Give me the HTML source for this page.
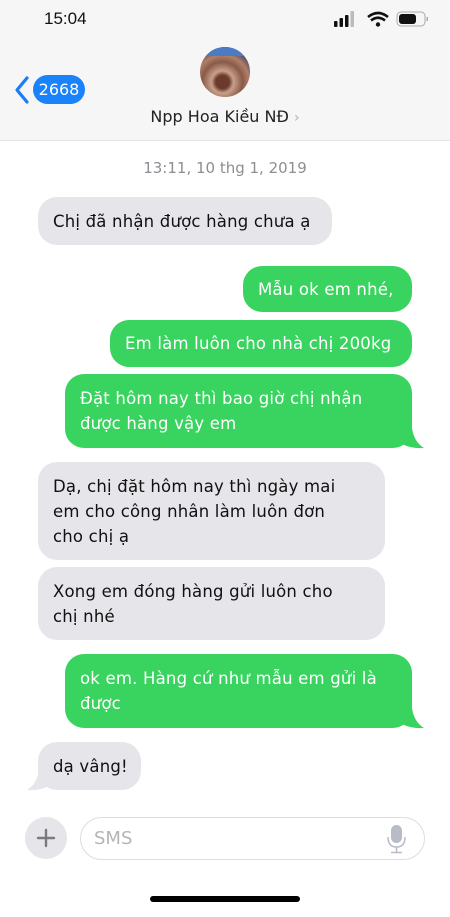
<!DOCTYPE html>
<html><head><meta charset="utf-8"><style>
*{margin:0;padding:0;box-sizing:border-box}
body{width:450px;height:917px;background:#fff;position:relative;overflow:hidden;font-family:"DejaVu Sans","Liberation Sans",sans-serif}
.hdr{position:absolute;left:0;top:0;width:450px;height:141px;background:#f6f6f6;border-bottom:1px solid #e4e4e4}
.b{position:absolute;font-size:16.5px;letter-spacing:0.2px;line-height:25px;padding:0 15px;border-radius:19px;display:flex;align-items:center;white-space:nowrap}
.g{background:#e5e5ea;color:#111}
.s{background:#39d45f;color:#fff}
.tail{position:absolute}
</style></head><body>
<div class="hdr"></div>
<div style="position:absolute;left:44px;top:9px;font-size:17px;color:#111;font-family:'Liberation Sans',sans-serif">15:04</div>
<svg style="position:absolute;left:332px;top:9px" width="100" height="22" viewBox="0 0 100 22">
<rect x="2" y="12" width="3.5" height="6" rx="1" fill="#111"/>
<rect x="7.5" y="9" width="3.5" height="9" rx="1" fill="#111"/>
<rect x="13" y="6" width="3.5" height="12" rx="1" fill="#111"/>
<rect x="18.5" y="2" width="3.5" height="16" rx="1" fill="#bbb"/>
<path d="M36 8 Q46 0 56 8" stroke="#111" stroke-width="2.6" fill="none"/>
<path d="M39 11.5 Q46 6 53 11.5" stroke="#111" stroke-width="2.6" fill="none"/>
<circle cx="46" cy="15.5" r="2.2" fill="#111"/>
<rect x="65" y="3" width="28" height="14" rx="4" fill="none" stroke="#aaa" stroke-width="1"/>
<rect x="67" y="5" width="17" height="10" rx="3" fill="#111"/>
<rect x="94.5" y="8" width="1.5" height="4" fill="#aaa"/>
</svg>
<div style="position:absolute;left:200px;top:47px;width:50px;height:50px;border-radius:50%;background:radial-gradient(circle at 45% 70%,#6b3a2a 0 15%,#c9a08b 25%,#8a5a48 45%,#b07f6a 60%,#3c3d5a 80%);overflow:hidden"><div style="height:9px;background:#4a7bc4"></div></div>
<svg style="position:absolute;left:12px;top:74px" width="20" height="32" viewBox="0 0 20 32"><path d="M15 4 L5 16 L15 28" stroke="#1a7cf6" stroke-width="3.2" fill="none" stroke-linecap="round" stroke-linejoin="round"/></svg>
<div style="position:absolute;left:33px;top:75px;width:52px;height:29px;border-radius:15px;background:#1a82fb;color:#fff;font-size:16px;line-height:29px;text-align:center">2668</div>
<div style="position:absolute;left:0;width:450px;top:107px;text-align:center;font-size:16px;color:#222">Npp Hoa Kiều NĐ <span style="color:#b0b0b0;font-size:14px">›</span></div>
<div style="position:absolute;left:0;width:450px;top:159px;text-align:center;font-size:15px;color:#8e8e93">13:11, 10 thg 1, 2019</div>

<div class="b g" style="left:38px;top:197px;width:294px;height:48px">Chị đã nhận được hàng chưa ạ</div>
<div class="b s" style="left:243px;top:266px;width:169px;height:46px">Mẫu ok em nhé,</div>
<div class="b s" style="left:110px;top:320px;width:302px;height:47px">Em làm luôn cho nhà chị 200kg</div>
<div class="b s" style="left:65px;top:374px;width:347px;height:74px">Đặt hôm nay thì bao giờ chị nhận<br>được hàng vậy em</div>
<svg class="tail" style="left:398px;top:428px" width="28" height="21"><path d="M0 0 L14 0 Q16 14 26 20 Q14 21 4 16 Z" fill="#39d45f"/></svg>
<div class="b g" style="left:38px;top:462px;width:347px;height:98px">Dạ, chị đặt hôm nay thì ngày mai<br>em cho công nhân làm luôn đơn<br>cho chị ạ</div>
<div class="b g" style="left:38px;top:567px;width:347px;height:73px">Xong em đóng hàng gửi luôn cho<br>chị nhé</div>
<div class="b s" style="left:65px;top:654px;width:347px;height:74px">ok em. Hàng cứ như mẫu em gửi là<br>được</div>
<svg class="tail" style="left:398px;top:708px" width="28" height="21"><path d="M0 0 L14 0 Q16 14 26 20 Q14 21 4 16 Z" fill="#39d45f"/></svg>
<div class="b g" style="left:38px;top:742px;width:103px;height:48px">dạ vâng!</div>
<svg class="tail" style="left:25px;top:770px" width="28" height="21"><path d="M28 0 L14 0 Q12 14 2 20 Q14 21 24 16 Z" fill="#e5e5ea"/></svg>

<div style="position:absolute;left:25px;top:817px;width:42px;height:42px;border-radius:50%;background:#e5e5ea"></div>
<svg style="position:absolute;left:25px;top:817px" width="42" height="42"><path d="M21 13 V29 M13 21 H29" stroke="#7a7a7e" stroke-width="2.4" stroke-linecap="round"/></svg>
<div style="position:absolute;left:80px;top:817px;width:345px;height:43px;border-radius:22px;border:1px solid #ddd;background:#fff"></div>
<div style="position:absolute;left:94px;top:828px;font-size:18px;color:#b5b5b5">SMS</div>
<svg style="position:absolute;left:384px;top:823px" width="26" height="32"><rect x="7" y="2" width="11" height="18" rx="5.5" fill="#b8bcc6"/><path d="M4 14 Q4 24 12.5 24 Q21 24 21 14 M12.5 24 V29 M7 29.5 H18" stroke="#b8bcc6" stroke-width="1.5" fill="none"/></svg>
<div style="position:absolute;left:150px;top:896px;width:150px;height:6px;border-radius:3px;background:#000"></div>
</body></html>
